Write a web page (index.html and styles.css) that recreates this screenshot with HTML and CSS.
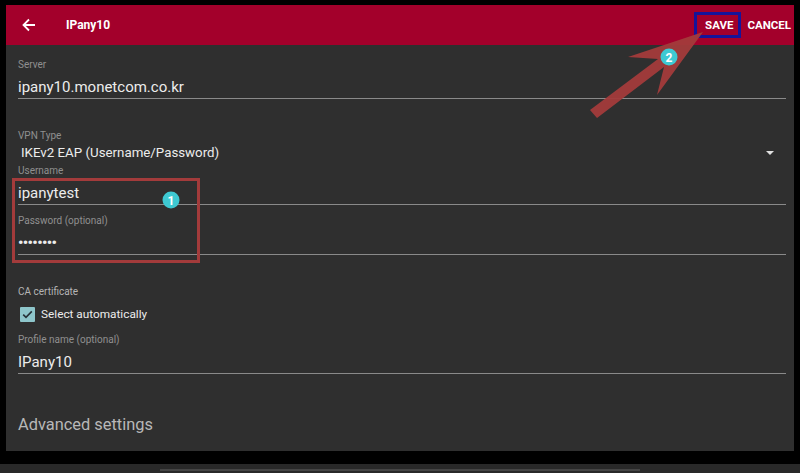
FILE: index.html
```html
<!DOCTYPE html>
<html lang="en">
<head>
    <meta charset="UTF-8">
    <meta name="viewport" content="width=device-width, initial-scale=1.0">
    <title>IPany10</title>
    <link rel="stylesheet" href="styles.css">
</head>
<body>
    <div class="screen">
        <header class="appbar">
            <svg class="back" width="14" height="14" viewBox="0 0 14 14">
                <path d="M13 7H2M7 1.5L1.5 7 7 12.5" fill="none" stroke="#fff" stroke-width="1.8"/>
            </svg>
            <span class="title">IPany10</span>
            <div class="actions">
                <span class="action save">SAVE</span>
                <span class="action">CANCEL</span>
            </div>
        </header>

        <form class="profile">
            <div class="field first">
                <label>Server</label>
                <div class="value line">ipany10.monetcom.co.kr</div>
            </div>

            <div class="field gap-big">
                <label>VPN Type</label>
                <div class="value spinner">IKEv2 EAP (Username/Password)<span class="caret"></span></div>
            </div>

            <div class="highlight">
                <div class="field tight">
                    <label>Username</label>
                    <div class="value line">ipanytest</div>
                </div>
                <div class="field gap-small">
                    <label>Password (optional)</label>
                    <div class="value line dots">&bull;&bull;&bull;&bull;&bull;&bull;&bull;&bull;</div>
                </div>
            </div>

            <div class="field gap-big">
                <label class="plain">CA certificate</label>
                <div class="check-row">
                    <span class="checkbox">
                        <svg width="15" height="15" viewBox="0 0 15 15">
                            <path d="M3.2 7.6l2.8 2.8 5.8-6" fill="none" stroke="#263238" stroke-width="1.6"/>
                        </svg>
                    </span>
                    Select automatically
                </div>
            </div>

            <div class="field gap-small">
                <label>Profile name (optional)</label>
                <div class="value line">IPany10</div>
            </div>

            <div class="advanced">Advanced settings</div>
        </form>

        <!-- annotation overlay -->
        <svg class="overlay" width="788" height="446" viewBox="6 5 788 446">
            <polygon points="590,110 658,59 628,57 703,32 657,95 664,67 597,118" fill="#a33b3b" opacity="0.95"/>
            <circle cx="669" cy="57" r="8.5" fill="#3ec9d2"/>
            <text x="669" y="61.5" class="badge-num">2</text>
            <circle cx="171" cy="200" r="8.5" fill="#3ec9d2"/>
            <text x="171" y="204.5" class="badge-num">1</text>
        </svg>
    </div>
    <div class="dock"><span class="dock-line"></span></div>
</body>
</html>
```

FILE: styles.css
```css
/* Reset */
body, form, label, div {
    margin: 0;
    padding: 0;
    box-sizing: border-box;
}

body {
    background: #000;
    font-family: 'Roboto', sans-serif;
    height: 473px;
    overflow: hidden;
}

/* Device screen */
.screen {
    position: relative;
    margin: 5px 6px 0 6px;
    width: 788px;
    height: 446px;
    background: #2f2f2f;
}

.appbar {
    display: flex;
    align-items: center;
    height: 40px;
    padding: 0 3px 0 16px;
    background: #a3002b;
    color: #fff;
}

.title {
    margin-left: 30px;
    font-size: 12px;
    font-weight: 700;
}

.actions {
    margin-left: auto;
    display: flex;
    align-items: center;
    gap: 6px;
}

.action {
    font-size: 11.5px;
    font-weight: 700;
}

.save {
    border: 3px solid #15149a;
    height: 26px;
    line-height: 20px;
    padding: 0 5px 0 8px;
    box-sizing: border-box;
}

/* Form */
.profile {
    padding: 0 8px 0 12px;
}

.field label {
    display: block;
    font-size: 10px;
    line-height: 14px;
    color: #8f8f8f;
}

.field label.plain {
    color: #b5b5b5;
}

.first { margin-top: 13px; }
.gap-big { margin-top: 30px; }
.gap-small { margin-top: 9px; }
.tight { margin-top: 1px; }

.value {
    font-size: 15px;
    line-height: 20px;
    color: #ececec;
}

.value.line {
    margin-top: 5px;
    padding-bottom: 1px;
    border-bottom: 1px solid #8a8a8a;
}

.value.dots {
    letter-spacing: -0.6px;
    font-size: 15px;
    font-weight: 700;
}

.spinner {
    position: relative;
    padding-left: 3px;
    font-size: 13.3px;
}

.caret {
    position: absolute;
    right: 12px;
    top: 8px;
    border-left: 4px solid transparent;
    border-right: 4px solid transparent;
    border-top: 4px solid #e0e0e0;
}

.highlight {
    position: relative;
}

.highlight::before {
    content: "";
    position: absolute;
    left: -6px;
    top: 14px;
    width: 188px;
    height: 85px;
    border: 3px solid #a33b3b;
    box-sizing: border-box;
}

.check-row {
    display: flex;
    align-items: center;
    gap: 6px;
    height: 20px;
    margin-top: 5px;
    padding-left: 2px;
    font-size: 11.8px;
    color: #ececec;
}

.checkbox {
    display: block;
    width: 15px;
    height: 15px;
    background: #8ec6cb;
    border-radius: 1px;
}

.checkbox svg {
    display: block;
}

.advanced {
    margin-top: 39px;
    font-size: 16.4px;
    line-height: 24px;
    color: #b8b8b8;
}

/* Annotations drawn on top */
.overlay {
    position: absolute;
    left: 0;
    top: 0;
    pointer-events: none;
}

.badge-num {
    font-family: 'Roboto', sans-serif;
    font-size: 12px;
    font-weight: 700;
    fill: #fff;
    text-anchor: middle;
}

/* Bottom strip */
.dock {
    margin-top: 13px;
    height: 9px;
    background: #292929;
    padding-top: 5px;
}

.dock-line {
    display: block;
    margin-left: 160px;
    width: 480px;
    height: 2px;
    background: #454545;
}
```
